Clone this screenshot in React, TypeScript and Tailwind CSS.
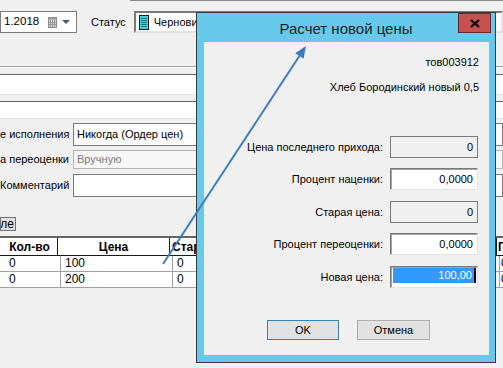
import React from "react";

const font = { fontFamily: "'Liberation Sans', Arial, sans-serif" };

const CalendarIcon = () => (
  <svg width="9" height="11" viewBox="0 0 9 11" className="ml-auto">
    <rect x="0.5" y="0.5" width="8" height="10" fill="#d8d8d8" stroke="#8a8a8a" />
    <rect x="0.5" y="0.5" width="8" height="2" fill="#9a9a9a" />
    {[2, 4, 6].map((x) => (
      <line key={x} x1={x + 0.5} y1="3" x2={x + 0.5} y2="10" stroke="#9a9a9a" />
    ))}
    {[5, 7].map((y) => (
      <line key={y} x1="1" y1={y + 0.5} x2="8" y2={y + 0.5} stroke="#9a9a9a" />
    ))}
  </svg>
);

const NoteIcon = () => (
  <svg width="10" height="15" viewBox="0 0 10 15">
    <rect x="0.5" y="0.5" width="9" height="14" fill="#3fd3de" stroke="#1a1a1a" />
    {[3, 5, 7, 9, 11].map((y) => (
      <line key={y} x1="2" y1={y + 0.5} x2="8" y2={y + 0.5} stroke="#1e6f7a" />
    ))}
  </svg>
);

const FieldRow = ({
  label,
  value,
  readOnly,
  mt,
}: {
  label: string;
  value: string;
  readOnly?: boolean;
  mt: string;
}) => (
  <div className={`flex items-center justify-end gap-[7px] pr-[11px] ${mt}`}>
    <span>{label}</span>
    {readOnly ? (
      <div className="flex h-[22px] w-[88px] items-center justify-end border border-[#7a7a7a] bg-[#f0f0f0] pr-[4px]">
        {value}
      </div>
    ) : (
      <div className="flex h-[22px] w-[88px] items-center justify-end border border-[#7a7a7a] border-r-[#e3e3e3] border-b-[#e3e3e3] bg-white pr-[4px] shadow-[inset_1px_1px_0_#a0a0a0]">
        {value}
      </div>
    )}
  </div>
);

const Cell = ({
  w,
  children,
  head,
}: {
  w: string;
  children?: React.ReactNode;
  head?: boolean;
}) => (
  <div
    className={`${w} shrink-0 overflow-hidden whitespace-nowrap border-r ${
      head
        ? "border-[#1a1a1a] text-center font-bold"
        : "border-[#a0a0a0] pl-[4px]"
    }`}
  >
    {children}
  </div>
);

const TableRow = ({ cells }: { cells: string[] }) => (
  <div className="flex h-[16px] items-center border-b border-[#a0a0a0] bg-white leading-[15px]">
    <Cell w="w-[2px]" />
    <Cell w="w-[56px]">{cells[0]}</Cell>
    <Cell w="w-[112px]">{cells[1]}</Cell>
    <Cell w="w-[327px]">{cells[2]}</Cell>
    <div className="flex-1 pl-[1px]">{cells[3]}</div>
  </div>
);

const FormLabel = ({ children }: { children: React.ReactNode }) => (
  <span className="w-[67px] shrink-0 whitespace-nowrap text-right">{children}</span>
);

export default function App() {
  return (
    <div
      className="relative h-[368px] w-[503px] overflow-hidden bg-[#f0f0f0] text-[11px] text-black"
      style={font}
    >
      {/* background window */}
      <div className="ml-[130px] h-px bg-[#8a8a8a]" />
      <div className="mt-[10px] flex h-[22px] items-center">
        <div className="flex h-[22px] w-[77px] items-center border border-[#7a7a7a] bg-white pl-[3px] pr-[6px] text-[11.5px]">
          <span>1.2018</span>
          <CalendarIcon />
          <svg width="8" height="5" viewBox="0 0 8 5" className="ml-[5px]">
            <polygon points="0,0 8,0 4,4" fill="#4a5878" />
          </svg>
        </div>
        <span className="ml-[14px]">Статус</span>
        <div className="ml-[8px] flex h-[22px] flex-1 items-center gap-[5px] border-2 border-[#7a7a7a] border-r-[#e3e3e3] border-b-[#e3e3e3] bg-white pl-[3px]">
          <NoteIcon />
          <span>Черновик</span>
        </div>
      </div>
      <div className="mt-[33px] h-[2px] border-t border-[#a0a0a0] border-b border-b-white" />
      <div className="mt-[6px] h-[21px] border-t border-b border-[#646464] border-b-[#e3e3e3] bg-white" />
      <div className="mt-[6px] h-[18px] border-t border-b border-[#646464] border-b-[#e3e3e3] bg-white" />

      <div className="mt-[4px] flex h-[23px] items-center">
        <FormLabel>е исполнения</FormLabel>
        <div className="ml-[6px] flex h-[23px] flex-1 items-center border border-[#7a7a7a] bg-white pl-[3px]">
          Никогда (Ордер цен)
        </div>
      </div>
      <div className="mt-[4px] flex h-[19px] items-center">
        <FormLabel>а переоценки</FormLabel>
        <div className="ml-[6px] flex h-[19px] flex-1 items-center border border-[#b5b5b5] bg-[#f7f7f7] pl-[3px] text-[#7a7a7a]">
          Вручную
        </div>
      </div>
      <div className="mt-[5px] flex h-[23px] items-center">
        <FormLabel>Комментарий</FormLabel>
        <div className="ml-[6px] h-[23px] flex-1 border border-[#7a7a7a] bg-white" />
      </div>

      <div className="mt-[20px] flex h-[14px] w-[16px] items-center justify-end overflow-hidden border border-[#707070] bg-[#e1e1e1] pr-[1px] text-[12px] leading-none">
        ле
      </div>

      {/* table */}
      <div className="mt-[5px] border-t-2 border-[#646464] text-[12px]">
        <div className="flex h-[18px] items-center border-b border-[#1a1a1a] bg-white">
          <Cell w="w-[2px]" head />
          <Cell w="w-[56px]" head>
            Кол-во
          </Cell>
          <Cell w="w-[112px]" head>
            Цена
          </Cell>
          <div className="w-[327px] shrink-0 border-r border-[#1a1a1a] pl-[2px] font-bold">
            Старая цена
          </div>
          <div className="flex-1 pl-[1px] font-bold">П</div>
        </div>
        <TableRow cells={["0", "100", "0", "0"]} />
        <TableRow cells={["0", "200", "0", "0"]} />
      </div>

      {/* dialog window */}
      <div className="absolute left-[196px] top-[12px] flex h-[351px] w-[300px] flex-col border border-[#3a3a3a] bg-[#66c8eb] text-[11px]">
        <div className="grid h-[29px] shrink-0 grid-cols-[37px_1fr_37px]">
          <div />
          <div className="pt-[5px] text-center text-[15px] text-[#1e1e1e]">
            Расчет новой цены
          </div>
          <div className="flex justify-end pr-[4px]">
            <div className="flex h-[20px] w-[33px] items-center justify-center border border-[#5a3030] bg-[#c75050]">
              <svg width="10" height="9" viewBox="0 0 10 9">
                <path d="M1 1 L9 8 M9 1 L1 8" stroke="#000" strokeWidth="2.2" />
              </svg>
            </div>
          </div>
        </div>
        <div className="mb-[7px] ml-[7px] mr-[6px] flex flex-1 flex-col bg-[#f0f0f0]">
          <div className="mt-[12px] h-[16px] pr-[10px] text-right leading-[16px]">
            тов003912
          </div>
          <div className="mt-[9px] h-[16px] pr-[10px] text-right leading-[16px]">
            Хлеб Бородинский новый 0,5
          </div>
          <FieldRow mt="mt-[41px]" label="Цена последнего прихода:" value="0" readOnly />
          <FieldRow mt="mt-[10px]" label="Процент наценки:" value="0,0000" />
          <FieldRow mt="mt-[11px]" label="Старая цена:" value="0" readOnly />
          <FieldRow mt="mt-[10px]" label="Процент переоценки:" value="0,0000" />
          <div className="mt-[11px] flex items-center justify-end gap-[7px] pr-[11px]">
            <span>Новая цена:</span>
            <div className="h-[22px] w-[88px] border border-[#7a7a7a] border-r-[#e3e3e3] border-b-[#e3e3e3] bg-white pt-[1px] pl-[2px] shadow-[inset_1px_1px_0_#a0a0a0]">
              <div className="flex h-[15px] items-center justify-end">
                <div className="flex h-[15px] flex-1 items-center justify-end bg-[#3399ff] pr-[2px] text-white">
                  100,00
                </div>
                <div className="h-[15px] w-[2px] bg-black" />
                <div className="w-[1px]" />
              </div>
            </div>
          </div>
          <div className="mt-[32px] flex gap-[18px] pl-[63px]">
            <div className="flex h-[20px] w-[72px] items-center justify-center border border-[#3c7fb1] bg-[#e1e1e1]">
              OK
            </div>
            <div className="flex h-[20px] w-[73px] items-center justify-center border border-[#adadad] bg-[#e1e1e1]">
              Отмена
            </div>
          </div>
        </div>
      </div>

      {/* annotation arrow */}
      <svg
        className="pointer-events-none absolute left-0 top-0"
        width="503"
        height="368"
        viewBox="0 0 503 368"
      >
        <line x1="163" y1="264" x2="299.4" y2="56" stroke="#3e7cc0" strokeWidth="2" />
        <polygon points="306,46 303.6,58.7 295.2,53.3" fill="#3e7cc0" />
      </svg>
    </div>
  );
}
